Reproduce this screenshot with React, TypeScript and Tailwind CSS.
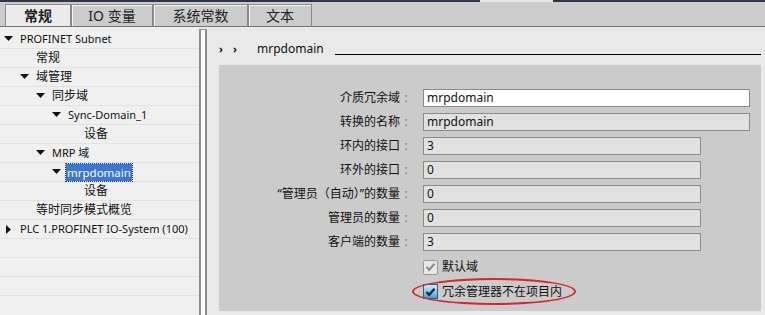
import React from "react";

const font = { fontFamily: '"Noto Sans", "Noto Sans CJK SC", sans-serif' };

type Node = { label: string; level: number; arrow?: "down" | "right"; selected?: boolean };

const tree: Node[] = [
  { label: "PROFINET Subnet", level: 0, arrow: "down" },
  { label: "常规", level: 1 },
  { label: "域管理", level: 1, arrow: "down" },
  { label: "同步域", level: 2, arrow: "down" },
  { label: "Sync-Domain_1", level: 3, arrow: "down" },
  { label: "设备", level: 4 },
  { label: "MRP 域", level: 2, arrow: "down" },
  { label: "mrpdomain", level: 3, arrow: "down", selected: true },
  { label: "设备", level: 4 },
  { label: "等时同步模式概览", level: 1 },
  { label: "PLC 1.PROFINET IO-System (100)", level: 0, arrow: "right" },
  { label: "", level: 0 },
  { label: "", level: 0 },
  { label: "", level: 0 },
];

const fields = [
  { label: "介质冗余域", value: "mrpdomain", wide: true, white: true },
  { label: "转换的名称", value: "mrpdomain", wide: true },
  { label: "环内的接口", value: "3" },
  { label: "环外的接口", value: "0" },
  { label: "“管理员（自动）”的数量", value: "0" },
  { label: "管理员的数量", value: "0" },
  { label: "客户端的数量", value: "3" },
];

function Arrow({ dir }: { dir: "down" | "right" }) {
  return dir === "down" ? (
    <svg width="9" height="6" viewBox="0 0 9 6" className="shrink-0">
      <polygon points="0,0 9,0 4.5,5" fill="#111" />
    </svg>
  ) : (
    <svg width="6" height="9" viewBox="0 0 6 9" className="shrink-0 ml-[2px]">
      <polygon points="0,0 5,4.5 0,9" fill="#111" />
    </svg>
  );
}

function Tab({ label, active }: { label: string; active?: boolean }) {
  return (
    <div
      className={
        "flex items-center justify-center h-[22px] border border-b-0 border-[#8a8a8a] shadow-[inset_1px_1px_0_#f4f4f4] text-[14px] text-[#222] " +
        (active ? "bg-[#ebebeb] font-bold" : "bg-[#cccccc]")
      }
    >
      {label}
    </div>
  );
}

// latin-heavy labels render a touch narrower in the original tree
const isLatin = (s: string) => /^[\x20-\x7e]+$/.test(s.replace("域", ""));

export default function App() {
  return (
    <div className="w-[765px] h-[315px] overflow-hidden flex flex-col bg-[#e9e9e9] text-[12px] text-[#111]" style={font}>
      {/* top strip */}
      <div className="h-[2px] flex shrink-0">
        <div className="w-[480px] bg-[#2e3748]" />
        <div className="w-[73px] bg-[#e6e6e6]" />
        <div className="flex-1 bg-[#2e3748]" />
      </div>

      {/* tabs */}
      <div className="h-[25px] shrink-0 bg-[#cccccc] border-b border-[#777] flex items-end pl-[5px]">
        <div className="grid grid-cols-[66px_82px_95px_64px] gap-0">
          <Tab label="常规" active />
          <Tab label="IO 变量" />
          <Tab label="系统常数" />
          <Tab label="文本" />
        </div>
      </div>

      <div className="flex flex-1 min-h-0">
        {/* tree */}
        <div className="w-[199px] shrink-0 bg-[#f0f0f0] pt-[3px] overflow-hidden">
          {tree.map((n, i) => (
            <div key={i} className="h-[19px] border-b border-[#e2e2e2] flex items-center">
              <div className="flex items-center" style={{ paddingLeft: 4 + n.level * 16 }}>
                <div className="w-[16px] flex items-center">{n.arrow && <Arrow dir={n.arrow} />}</div>
                {n.selected ? (
                  <span className="bg-[#3a76d6] text-white px-[1px] leading-[17px] outline-1 outline-dotted outline-[#1d2f6b] -ml-[2px] text-[11.5px]">
                    {n.label}
                  </span>
                ) : (
                  <span className={"whitespace-nowrap " + (n.label && isLatin(n.label) ? "text-[11px]" : "")}>
                    {n.label}
                  </span>
                )}
              </div>
            </div>
          ))}
        </div>

        {/* splitter */}
        <div className="w-[8px] shrink-0 mt-[2px] border-x-2 border-t border-[#8e8e8e] bg-white" />

        {/* right content */}
        <div className="flex-1 flex flex-col pl-[12px] pr-[4px] pt-[13px] pb-[4px]">
          <div className="flex items-center h-[18px] gap-[6px]">
            <span className="text-[11px] font-bold w-[8px]">›</span>
            <span className="text-[11px] font-bold w-[18px]">›</span>
            <span className="text-[12px]">mrpdomain</span>
            <div className="flex-1 h-px bg-black mt-[10px] ml-[5px]" />
          </div>

          <div className="mt-[7px] flex-1 bg-[#cbcbcb] pt-[21px] flex flex-col">
            {fields.map((f) => (
              <div key={f.label} className="h-[24px] flex items-center">
                <div className="w-[181px] text-right whitespace-nowrap">{f.label}</div>
                <div className="w-[12px] text-center text-[#7a7a7a]">:</div>
                <div
                  className={
                    "ml-[11px] h-[18px] border border-[#8a8a8a] flex items-center px-[3px] " +
                    (f.wide ? "w-[327px] " : "w-[278px] ") +
                    (f.white ? "bg-white" : "bg-[#e1e1e1]")
                  }
                >
                  {f.value}
                </div>
              </div>
            ))}

            <div className="h-[24px] flex items-center pl-[204px] mt-[1px]">
              <div className="w-[15px] h-[15px] border border-[#999] bg-[#e8e8e8] flex items-center justify-center rounded-[2px]">
                <svg width="11" height="10" viewBox="0 0 11 10">
                  <path d="M1.5 5 L4.2 7.8 L9.5 1.8" fill="none" stroke="#8c8c8c" strokeWidth="2.2" />
                </svg>
              </div>
              <span className="ml-[4px]">默认域</span>
            </div>

            <div className="h-[25px] flex items-center pl-[193px]">
              <div className="relative flex items-center pl-[11px] pr-[14px] h-[27px]">
                <div className="absolute inset-0 rounded-[50%] border-2 border-[#d8242e]" />
                <div className="w-[15px] h-[15px] border border-[#3c5a7a] bg-gradient-to-b from-[#c8ecff] to-[#2fa6e0] flex items-center justify-center">
                  <svg width="11" height="10" viewBox="0 0 11 10">
                    <path d="M1.5 5 L4.2 7.8 L9.5 1.8" fill="none" stroke="#14233a" strokeWidth="2.2" />
                  </svg>
                </div>
                <span className="ml-[4px] whitespace-nowrap">冗余管理器不在项目内</span>
              </div>
            </div>
          </div>
        </div>
      </div>
    </div>
  );
}
